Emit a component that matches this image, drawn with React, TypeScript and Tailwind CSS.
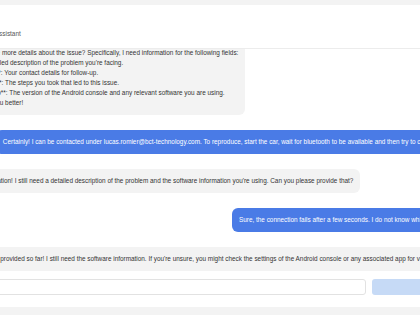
const font = { fontFamily: '"Liberation Sans", Arial, sans-serif' };

function Bubble({ from, children }: { from: "bot" | "user"; children: React.ReactNode }) {
    if (from === "user") {
        return (
            <div className="flex justify-end">
                <div className="whitespace-nowrap rounded-[6px] bg-[#4a7be6] px-[7px] py-[7px] text-white">
                    {children}
                </div>
            </div>
        );
    }
    return (
        <div className="flex justify-start">
            <div className="whitespace-pre rounded-[6px] bg-[#f3f3f3] px-[7px] py-[7px] text-[#333]">
                {children}
            </div>
        </div>
    );
}

export default function App() {
    return (
        <div
            className="relative h-[315px] w-[420px] overflow-hidden bg-white text-[6.4px] leading-[10px]"
            style={font}
        >
            <div className="ml-[-93px] flex h-full w-[597px] flex-col">
                <div className="h-[5px] shrink-0 bg-[#f3f3f3]" />

                <header className="flex h-[44px] shrink-0 items-end border-b border-[#ececec] pb-[9px] pl-[64px] text-[#555]">
                    Support Assistant
                </header>

                <div className="flex h-[226px] shrink-0 flex-col justify-end gap-[15px] overflow-hidden px-[14px] pb-[4px]">
                    <Bubble from="bot">
                        {"Could you please provide more details about the issue? Specifically, I need information for the following fields:\n" +
                            "1. **Description**: A detailed description of the problem you're facing.\n" +
                            "2. **Contact Information**: Your contact details for follow-up.\n" +
                            "3. **Steps to Reproduce**: The steps you took that led to this issue.\n" +
                            "4. **Software Version Info**: The version of the Android console and any relevant software you are using.\n" +
                            "This will help us assist you better!"}
                    </Bubble>

                    <Bubble from="user">
                        Certainly! I can be contacted under lucas.romier@bct-technology.com. To reproduce, start the car, wait for bluetooth to be available and then try to connect to the console.
                    </Bubble>

                    <Bubble from="bot">
                        Thank you for the information! I still need a detailed description of the problem and the software information you're using. Can you please provide that?
                    </Bubble>

                    <Bubble from="user">
                        Sure, the connection fails after a few seconds. I do not know which version I am using.
                    </Bubble>

                    <Bubble from="bot">
                        Thanks for all info you've provided so far! I still need the software information. If you're unsure, you might check the settings of the Android console or any associated app for version details.
                    </Bubble>
                </div>

                <div className="flex h-[32px] shrink-0 items-start gap-[6px] px-[14px] pt-[4px]">
                    <input
                        className="h-[16px] flex-1 rounded-[3px] border border-[#e2e2e2] bg-white px-[5px] text-[6.4px] outline-none"
                        style={font}
                    />
                    <button className="h-[16px] w-[118px] rounded-[3px] bg-[#c6daf6] text-[6.4px] text-white">
                        Send
                    </button>
                </div>

                <div className="flex-1 bg-[#f3f3f3]" />
            </div>
        </div>
    );
}
